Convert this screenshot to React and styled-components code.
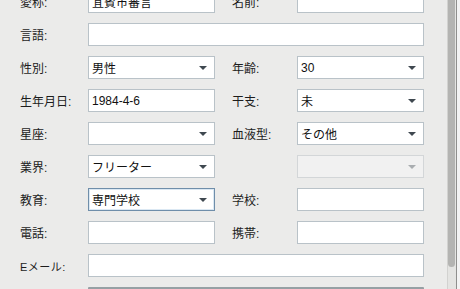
import styled, { createGlobalStyle } from "styled-components";

const GlobalStyle = createGlobalStyle`
  html, body {
    margin: 0;
    padding: 0;
    background: #ebebea;
    overflow: hidden;
  }
  body {
    font-family: "Liberation Sans", "Noto Sans CJK JP", sans-serif;
    font-size: 12px;
    color: #1a1a1a;
  }
`;

const Window = styled.div`
  display: flex;
  width: 460px;
  height: 289px;
  overflow: hidden;
`;

const Panel = styled.div`
  flex: 0 0 447px;
  height: 289px;
  overflow: hidden;
`;

const Form = styled.div`
  display: grid;
  grid-template-columns: 68px 127px 17px 65px 127px;
  grid-auto-rows: 23px;
  row-gap: 10px;
  margin-top: -10px;
  padding-left: 20px;
`;

const Label = styled.div`
  display: flex;
  align-items: center;
  font-size: 12px;
  color: #1c1c1c;
  white-space: nowrap;
  letter-spacing: ${(p) => (p.$small ? "0.5px" : "0")};
  font-size: ${(p) => (p.$small ? "11px" : "12px")};
`;

const Gap = styled.div``;

const Field = styled.div`
  box-sizing: border-box;
  height: 23px;
  display: flex;
  align-items: center;
  padding: 0 6px 0 3px;
  background: ${(p) => (p.$disabled ? "#f1f1f1" : "#ffffff")};
  border: 1px solid
    ${(p) => (p.$focus ? "#6f8eaa" : p.$disabled ? "#d3d6d8" : "#b9c2c8")};
  box-shadow: ${(p) => (p.$focus ? "inset 0 0 0 1px #dbe8f3" : "none")};
  grid-column: ${(p) => (p.$wide ? "span 4" : "span 1")};
  font-size: 12px;
  color: #111;
  white-space: nowrap;
  overflow: hidden;
`;

const Value = styled.span`
  flex: 1;
`;

const Arrow = styled.span`
  width: 0;
  height: 0;
  border-left: 4px solid transparent;
  border-right: 4px solid transparent;
  border-top: 4px solid ${(p) => (p.$disabled ? "#a9adb0" : "#3f4850")};
  margin-right: 1px;
`;

const Bar = styled.div`
  grid-column: span 4;
  margin-top: 0;
  background: #96a0a4;
  border-radius: 1px;
`;

const Track = styled.div`
  flex: 0 0 9px;
  height: 289px;
  border-left: 1px solid #d2d2d0;
  box-sizing: border-box;
  background: #e4e4e2;
`;

const Thumb = styled.div`
  width: 7px;
  height: 267px;
  margin-left: 0px;
  background: #b4b4b2;
  border-radius: 0 0 4px 4px;
`;

const Edge = styled.div`
  flex: 1;
  border-left: 1px solid #8f8f8d;
  background: #f3f3f3;
`;

const Input = ({ value, focus, wide }) => (
  <Field $focus={focus} $wide={wide}>
    <Value>{value}</Value>
  </Field>
);

const Select = ({ value, focus, disabled }) => (
  <Field $focus={focus} $disabled={disabled}>
    <Value>{value}</Value>
    <Arrow $disabled={disabled} />
  </Field>
);

export default function App() {
  return (
    <>
      <GlobalStyle />
      <Window>
        <Panel>
          <Form>
            <Label>愛称:</Label>
            <Input value="宜賓市審言" />
            <Gap />
            <Label>名前:</Label>
            <Input />

            <Label>言語:</Label>
            <Input wide />

            <Label>性別:</Label>
            <Select value="男性" />
            <Gap />
            <Label>年齢:</Label>
            <Select value="30" />

            <Label>生年月日:</Label>
            <Input value="1984-4-6" />
            <Gap />
            <Label>干支:</Label>
            <Select value="未" />

            <Label>星座:</Label>
            <Select />
            <Gap />
            <Label>血液型:</Label>
            <Select value="その他" />

            <Label>業界:</Label>
            <Select value="フリーター" />
            <Gap />
            <Label />
            <Select disabled />

            <Label>教育:</Label>
            <Select value="専門学校" focus />
            <Gap />
            <Label>学校:</Label>
            <Input />

            <Label>電話:</Label>
            <Input />
            <Gap />
            <Label>携帯:</Label>
            <Input />

            <Label $small>Eメール:</Label>
            <Input wide />

            <Label />
            <Bar />
          </Form>
        </Panel>
        <Track>
          <Thumb />
        </Track>
        <Edge />
      </Window>
    </>
  );
}
